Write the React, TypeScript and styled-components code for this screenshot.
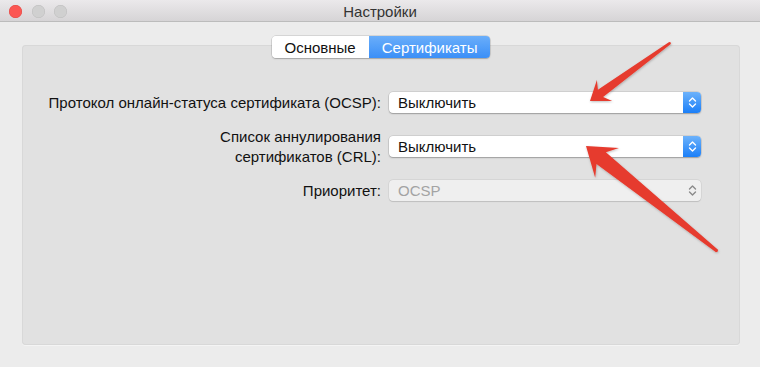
import React from "react";
import styled, { createGlobalStyle } from "styled-components";

const GlobalStyle = createGlobalStyle`
    html, body {
        margin: 0;
        padding: 0;
        background: #ececec;
    }
    body {
        font-family: "Liberation Sans", Arial, sans-serif;
        -webkit-font-smoothing: antialiased;
    }
`;

type Pt = [number, number];

// builds a tapered annotation arrow from tail to tip
const arrowPoints = (tail: Pt, tip: Pt, headBack: number, headHalf: number, neckHalf: number, tailHalf: number) => {
    const dx = tip[0] - tail[0];
    const dy = tip[1] - tail[1];
    const len = Math.hypot(dx, dy);
    const ux = dx / len;
    const uy = dy / len;
    const nx = -uy;
    const ny = ux;
    const at = (back: number, side: number): string =>
        `${(tip[0] - ux * back + nx * side).toFixed(1)},${(tip[1] - uy * back + ny * side).toFixed(1)}`;
    const neck = headBack * 0.72;
    return [
        at(0, 0),
        at(headBack, headHalf),
        at(neck, neckHalf),
        at(len, tailHalf),
        at(len + 1, 0),
        at(len, -tailHalf),
        at(neck, -neckHalf),
        at(headBack, -headHalf),
    ].join(" ");
};

const StepperIcon: React.FC<{ color: string }> = ({ color }) => (
    <svg width="9" height="13" viewBox="0 0 9 13" fill="none" stroke={color} strokeWidth="1.4" strokeLinecap="round" strokeLinejoin="round">
        <path d="M1.5 5 L4.5 2 L7.5 5" />
        <path d="M1.5 8 L4.5 11 L7.5 8" />
    </svg>
);

interface SelectProps {
    value: string;
    disabled?: boolean;
}

const Select: React.FC<SelectProps> = ({ value, disabled }) => (
    <SelectBox $disabled={disabled}>
        <SelectValue $disabled={disabled}>{value}</SelectValue>
        <Stepper $disabled={disabled}>
            <StepperIcon color={disabled ? "#8a8a8a" : "#ffffff"} />
        </Stepper>
    </SelectBox>
);

const App: React.FC = () => {
    return (
        <Window>
            <GlobalStyle />
            <TitleBar>
                <Lights>
                    <Light $color="#fc5753" $border="#df4744" />
                    <Light $color="#d0d0d0" $border="#bdbdbd" />
                    <Light $color="#d0d0d0" $border="#bdbdbd" />
                </Lights>
                <Title>Настройки</Title>
            </TitleBar>
            <Body>
                <Tabs>
                    <Tab>Основные</Tab>
                    <Tab $active>Сертификаты</Tab>
                </Tabs>
                <Panel>
                    <Form>
                        <Label>Протокол онлайн-статуса сертификата (OCSP):</Label>
                        <Select value="Выключить" />
                        <Label>
                            Список аннулирования
                            <br />
                            сертификатов (CRL):
                        </Label>
                        <Select value="Выключить" />
                        <Label>Приоритет:</Label>
                        <Select value="OCSP" disabled />
                    </Form>
                </Panel>
            </Body>
            <Annotations width="760" height="367" viewBox="0 0 760 367">
                <defs>
                    <filter id="shadow" x="-10%" y="-10%" width="120%" height="120%">
                        <feDropShadow dx="0.5" dy="1" stdDeviation="0.8" floodColor="#000" floodOpacity="0.25" />
                    </filter>
                </defs>
                <polygon points={arrowPoints([670, 43], [590, 101], 18, 13, 4.5, 1.4)} fill="#e63b2e" filter="url(#shadow)" />
                <polygon points={arrowPoints([717, 251], [586, 146], 27, 19, 7.5, 1.6)} fill="#e63b2e" filter="url(#shadow)" />
            </Annotations>
        </Window>
    );
};

const Window = styled.div`
    position: relative;
    width: 760px;
    height: 367px;
    background: #ececec;
    overflow: hidden;
`;

const TitleBar = styled.div`
    position: relative;
    height: 22px;
    display: flex;
    align-items: center;
    justify-content: center;
    background: linear-gradient(#ebe9eb, #d6d4d6);
    border-bottom: 1px solid #bcbcbc;
    box-sizing: border-box;
`;

const Lights = styled.div`
    position: absolute;
    left: 9px;
    top: 4.5px;
    display: flex;
    gap: 9.5px;
`;

const Light = styled.span<{ $color: string; $border: string }>`
    width: 13px;
    height: 13px;
    border-radius: 50%;
    background: ${(p) => p.$color};
    box-shadow: inset 0 0 0 0.5px ${(p) => p.$border};
`;

const Title = styled.div`
    font-size: 15px;
    color: #333333;
    padding-top: 1px;
`;

const Body = styled.div`
    display: flex;
    flex-direction: column;
    align-items: stretch;
    padding: 14px 20px 21px 22px;
`;

const Tabs = styled.div`
    position: relative;
    z-index: 1;
    align-self: center;
    display: flex;
    height: 22px;
    margin-bottom: -13px;
    border-radius: 4px;
    box-shadow: 0 0 0 0.5px rgba(0, 0, 0, 0.18), 0 1px 1.5px rgba(0, 0, 0, 0.2);
    overflow: hidden;
`;

const Tab = styled.div<{ $active?: boolean }>`
    display: flex;
    align-items: center;
    justify-content: center;
    padding: 0 13px;
    font-size: 15px;
    color: ${(p) => (p.$active ? "#ffffff" : "#111111")};
    background: ${(p) => (p.$active ? "linear-gradient(#6aaefa, #3b8ff7)" : "#ffffff")};
`;

const Panel = styled.div`
    height: 300px;
    box-sizing: border-box;
    background: #e1e1e1;
    border-radius: 4px;
    box-shadow: inset 0 0 0 1px #d8d8d8, 0 1px 0 #f4f4f4;
    padding: 47px 39px 0 0;
`;

const Form = styled.div`
    display: grid;
    grid-template-columns: 1fr 312px;
    column-gap: 8px;
    row-gap: 13.5px;
    align-items: center;
`;

const Label = styled.div`
    text-align: right;
    font-size: 15px;
    line-height: 20px;
    color: #111111;
`;

const SelectBox = styled.div<{ $disabled?: boolean }>`
    display: flex;
    height: 21px;
    border-radius: 4px;
    background: ${(p) => (p.$disabled ? "#efefef" : "#ffffff")};
    box-shadow: ${(p) =>
        p.$disabled
            ? "0 0 0 0.5px rgba(0, 0, 0, 0.08), 0 0.5px 1px rgba(0, 0, 0, 0.12)"
            : "0 0 0 0.5px rgba(0, 0, 0, 0.15), 0 1px 1.5px rgba(0, 0, 0, 0.25)"};
    overflow: hidden;
`;

const SelectValue = styled.div<{ $disabled?: boolean }>`
    flex: 1;
    display: flex;
    align-items: center;
    padding-left: 9px;
    font-size: 15px;
    color: ${(p) => (p.$disabled ? "#a3a3a3" : "#111111")};
`;

const Stepper = styled.div<{ $disabled?: boolean }>`
    width: 18px;
    display: flex;
    align-items: center;
    justify-content: center;
    background: ${(p) => (p.$disabled ? "transparent" : "linear-gradient(#6cb2fb, #1b7ff8)")};
`;

const Annotations = styled.svg`
    position: absolute;
    left: 0;
    top: 0;
    pointer-events: none;
`;

export default App;
